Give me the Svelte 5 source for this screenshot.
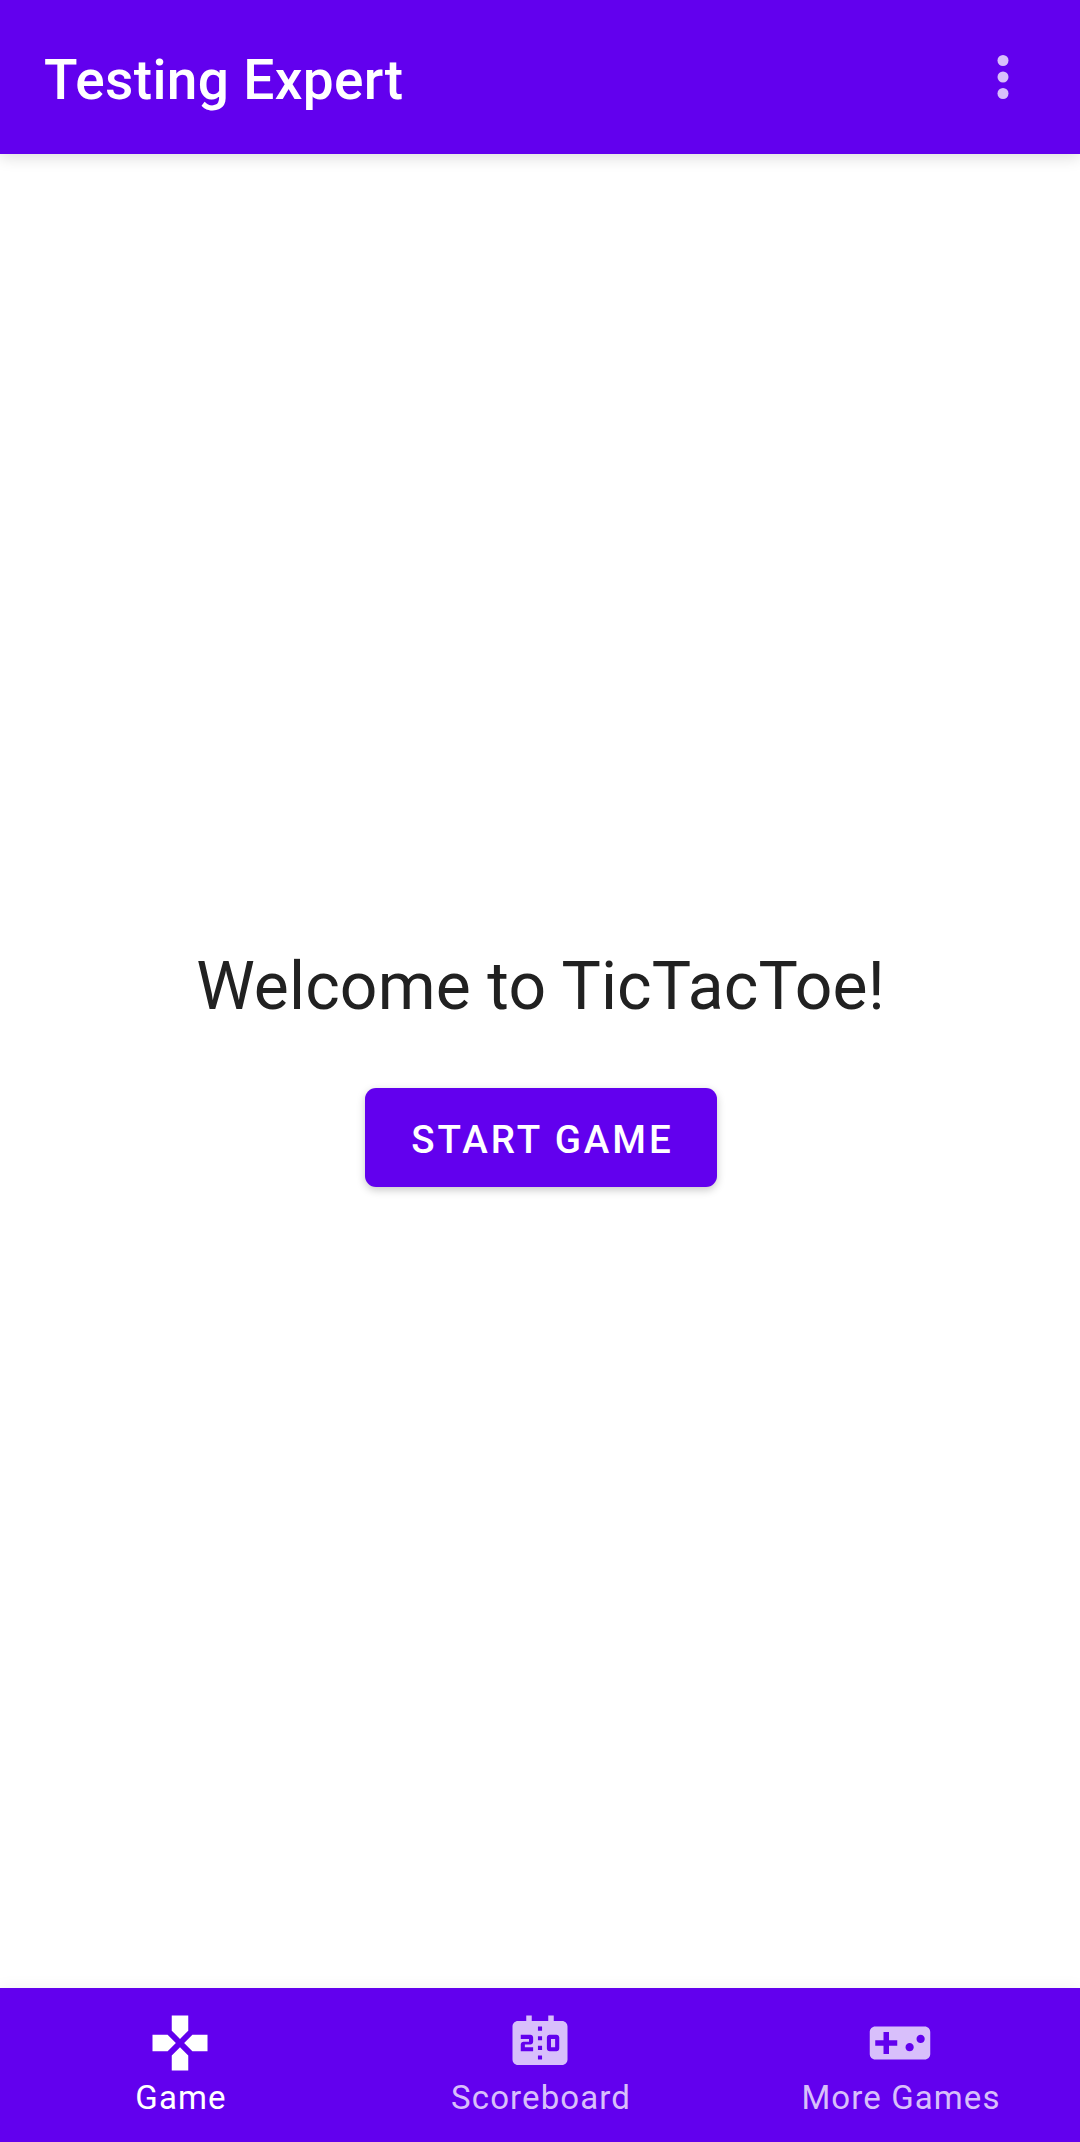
<script>
  const tabs = [
    { id: 'game', label: 'Game' },
    { id: 'scores', label: 'Scoreboard' },
    { id: 'more', label: 'More Games' },
  ];
  let active = $state('game');
</script>

<div class="screen">
  <header class="app-bar">
    <h1>Testing Expert</h1>
    <button class="overflow" aria-label="More options">
      <svg viewBox="0 0 24 24" aria-hidden="true">
        <circle cx="12" cy="6" r="2" />
        <circle cx="12" cy="12" r="2" />
        <circle cx="12" cy="18" r="2" />
      </svg>
    </button>
  </header>

  <main>
    <p class="welcome">Welcome to TicTacToe!</p>
    <button class="start">START GAME</button>
  </main>

  <nav>
    {#each tabs as tab (tab.id)}
      <button class="tab" class:active={active === tab.id} onclick={() => (active = tab.id)}>
        <svg viewBox="0 0 24 24" aria-hidden="true">
          {#if tab.id === 'game'}
            <path d="M15 7.5V2H9v5.5l3 3 3-3zM7.5 9H2v6h5.5l3-3-3-3zM9 16.5V22h6v-5.5l-3-3-3 3zM16.5 9l-3 3 3 3H22V9h-5.5z" />
          {:else if tab.id === 'scores'}
            <path
              fill-rule="evenodd"
              d="M20 4h-3V2h-2v2H9V2H7v2H4c-1.1 0-2 .9-2 2v12c0 1.1.9 2 2 2h16c1.1 0 2-.9 2-2V6c0-1.1-.9-2-2-2zM9.500 11.500c0 .55-.45 1-1 1h-2v1h3V15H5v-2.500c0-.55.45-1 1-1h2v-1H5V9h3.500c.55 0 1 .45 1 1zM12.750 18h-1.500v-1.500h1.500zM12.750 14.500h-1.500V13h1.500zM12.750 11h-1.500V9.500h1.500zM12.750 7.500h-1.500V6h1.500zM19 14c0 .55-.45 1-1 1h-2.500c-.55 0-1-.45-1-1v-4c0-.55.45-1 1-1H18c.55 0 1 .45 1 1zM16 10.500v3h1.500v-3z"
            />
          {:else}
            <path
              d="M21 6H3c-1.100 0-2 .9-2 2v8c0 1.100.9 2 2 2h18c1.100 0 2-.9 2-2V8c0-1.100-.9-2-2-2zM11 13H8v3H6v-3H3v-2h3V8h2v3h3v2zM15.500 15c-.83 0-1.500-.67-1.500-1.500s.67-1.500 1.500-1.500 1.500.67 1.500 1.500-.67 1.500-1.500 1.500zM19.500 12c-.83 0-1.500-.67-1.500-1.500S18.670 9 19.500 9s1.500.67 1.500 1.500-.67 1.500-1.500 1.500z"
            />
          {/if}
        </svg>
        <span>{tab.label}</span>
      </button>
    {/each}
  </nav>
</div>

<style>
  :global(body) {
    margin: 0;
  }

  .screen {
    display: flex;
    flex-direction: column;
    width: 1080px;
    height: 2142px;
    background: #fff;
    font-family: Roboto, sans-serif;
    overflow: hidden;
  }

  button {
    border: 0;
    margin: 0;
    padding: 0;
    background: none;
    font-family: inherit;
  }

  svg {
    display: block;
    width: 66px;
    height: 66px;
    fill: currentColor;
  }

  .app-bar {
    box-sizing: border-box;
    display: flex;
    align-items: center;
    justify-content: space-between;
    flex: none;
    height: 154px;
    padding: 0 44px;
    background: #6200ee;
    color: #fff;
    box-shadow: 0 4px 14px rgba(0, 0, 0, 0.13);
  }

  h1 {
    margin: 5px 0 0;
    font-size: 55px;
    font-weight: 500;
    line-height: 64px;
    letter-spacing: 0.34px;
  }

  .overflow {
    color: #d8bffb;
  }

  main {
    display: flex;
    flex: 1;
    flex-direction: column;
    align-items: center;
    justify-content: center;
    gap: 63px;
    padding: 0 0 7px 2px;
  }

  .welcome {
    margin: 0;
    padding-right: 1px;
    color: #212121;
    font-size: 66px;
    line-height: 77px;
    letter-spacing: 0.14px;
  }

  .start {
    box-sizing: border-box;
    width: 352px;
    height: 99px;
    padding: 4px 0 0 3px;
    border-radius: 11px;
    background: #6200ee;
    color: #fff;
    font-size: 38.5px;
    font-weight: 500;
    letter-spacing: 2.95px;
    box-shadow: 0 3px 9px rgba(0, 0, 0, 0.22);
  }

  nav {
    display: grid;
    grid-template-columns: repeat(3, 1fr);
    flex: none;
    height: 154px;
    background: #6200ee;
    box-shadow: 0 0 16px rgba(0, 0, 0, 0.06);
  }

  .tab {
    display: flex;
    flex-direction: column;
    align-items: center;
    padding-top: 22px;
    gap: 2px;
    color: #d8bffb;
    font-size: 33px;
    line-height: 39px;
    letter-spacing: 0.0333em;
  }

  .tab span {
    padding-left: 2px;
  }

  .tab.active {
    color: #fff;
  }
</style>
